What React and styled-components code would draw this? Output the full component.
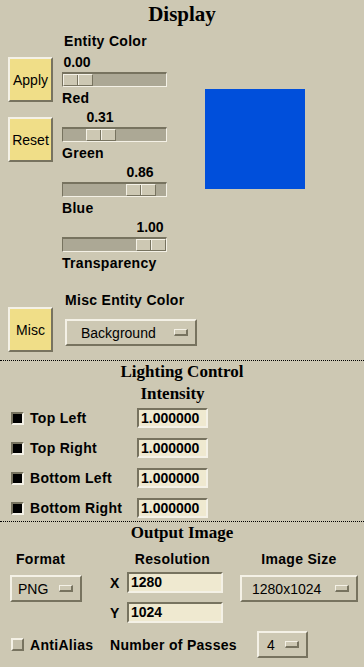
import React from "react";
import styled, { createGlobalStyle, css } from "styled-components";

const BG = "#cdc8b3";
const LIGHT = "#f4f1e6";
const DARK = "#77735f";

const GlobalStyle = createGlobalStyle`
  html, body {
    margin: 0;
    padding: 0;
    background: ${BG};
  }
  body {
    font-family: "Liberation Sans", Arial, sans-serif;
    font-size: 14px;
    color: #000;
  }
`;

const raised = css`
  border-style: solid;
  border-color: ${LIGHT} ${DARK} ${DARK} ${LIGHT};
`;

const sunken = css`
  border-style: solid;
  border-color: ${DARK} ${LIGHT} ${LIGHT} ${DARK};
`;

const Panel = styled.div`
  width: 364px;
  height: 667px;
  overflow: hidden;
  background: ${BG};
`;

const Title = styled.h1`
  margin: 0;
  height: 28px;
  line-height: 28px;
  text-align: center;
  font-family: "Liberation Serif", "Times New Roman", serif;
  font-weight: bold;
  font-size: 21px;
`;

const SectionTitle = styled.h2`
  margin: 1px 0 0;
  height: 20px;
  line-height: 20px;
  text-align: center;
  font-family: "Liberation Serif", "Times New Roman", serif;
  font-weight: bold;
  font-size: 17px;
`;

const Heading = styled.div`
  font-weight: bold;
  letter-spacing: 0.3px;
  line-height: 16px;
  height: 16px;
  white-space: nowrap;
  padding-left: ${(p) => p.$indent || 0}px;
  text-align: ${(p) => p.$align || "left"};
`;

const YellowButton = styled.button`
  box-sizing: border-box;
  width: 45px;
  height: 45px;
  padding: 0;
  background: #f0de88;
  ${raised};
  border-width: 2px;
  font-family: "Liberation Sans", Arial, sans-serif;
  font-size: 14px;
  color: #000;
`;

/* ---------- Display ---------- */

const DisplayArea = styled.div`
  display: flex;
  padding-left: 8px;
`;

const ButtonColumn = styled.div`
  display: flex;
  flex-direction: column;
  gap: 15px;
  padding-top: 29px;
`;

const SliderColumn = styled.div`
  display: flex;
  flex-direction: column;
  gap: 3px;
  width: 105px;
  margin-left: 9px;
  padding-top: 5px;

  & > ${Heading}:first-child {
    margin-bottom: 2px;
  }
`;

const SliderGroup = styled.div`
  display: flex;
  flex-direction: column;
`;

const ValueText = styled.div`
  width: 30px;
  height: 16px;
  line-height: 16px;
  font-weight: bold;
  text-align: center;
  margin-bottom: 2px;
`;

const Trough = styled.div`
  box-sizing: border-box;
  display: flex;
  width: 105px;
  height: 15px;
  background: #aca895;
  ${sunken};
  border-width: 2px 1px 1px 1px;
  margin-bottom: 3px;
`;

const Thumb = styled.div`
  box-sizing: border-box;
  width: 30px;
  height: 100%;
  ${raised};
  border-width: 1px;
  background: linear-gradient(
    to right,
    ${BG} 0 13px,
    ${DARK} 13px 14px,
    ${LIGHT} 14px 15px,
    ${BG} 15px
  );
`;

const Swatch = styled.div`
  width: 100px;
  height: 100px;
  margin: 61px 0 0 38px;
`;

/* ---------- Misc ---------- */

const MiscArea = styled.div`
  display: flex;
  padding-left: 8px;
  margin-top: 21px;
`;

const MiscButtonCell = styled.div`
  padding-top: 15px;
`;

const MiscControls = styled.div`
  margin-left: 12px;
  display: flex;
  flex-direction: column;
  gap: 11px;
`;

const Menu = styled.div`
  box-sizing: border-box;
  display: flex;
  align-items: center;
  width: ${(p) => p.$width}px;
  height: 27px;
  padding: 0 7px 0 ${(p) => p.$pad}px;
  ${raised};
  border-width: 2px;
  white-space: nowrap;
`;

const MenuMark = styled.span`
  box-sizing: border-box;
  width: 14px;
  height: 7px;
  margin-left: auto;
  ${raised};
  border-width: 1px 2px 2px 1px;
  background: ${BG};
`;

const Separator = styled.hr`
  margin: ${(p) => p.$top}px 0 0;
  border: 0;
  border-top: 1px dotted #000;
  height: 0;
`;

/* ---------- Lighting ---------- */

const LightGrid = styled.div`
  display: grid;
  grid-template-columns: 137px 71px;
  row-gap: 10px;
  margin-top: 2px;
`;

const GridHead = styled.div`
  grid-column: 2;
  text-align: center;
  white-space: nowrap;
  height: 20px;
  line-height: 20px;
  margin-bottom: -6px;
  font-family: "Liberation Serif", "Times New Roman", serif;
  font-weight: bold;
  font-size: 17px;
`;

const CheckLabel = styled.label`
  display: flex;
  align-items: center;
  gap: 6px;
  padding-left: 11px;
  font-weight: bold;
  letter-spacing: 0.3px;
  white-space: nowrap;
`;

const Check = styled.span`
  box-sizing: border-box;
  width: 13px;
  height: 13px;
  border-width: 2px;
  ${(p) => (p.$on ? sunken : raised)};
  background: ${(p) => (p.$on ? "#000" : "#c4bfaa")};
`;

const Field = styled.div`
  box-sizing: border-box;
  width: ${(p) => p.$width}px;
  height: ${(p) => p.$height}px;
  padding-left: 2px;
  ${sunken};
  border-width: 2px;
  background: #efe9d0;
  font-weight: bold;
  line-height: ${(p) => p.$height - 4}px;
`;

/* ---------- Output ---------- */

const OutputArea = styled.div`
  display: flex;
  margin-top: 8px;
`;

const FormatColumn = styled.div`
  width: 110px;
  padding-left: 10px;
  box-sizing: border-box;
  display: flex;
  flex-direction: column;
  gap: 8px;
`;

const ResolutionColumn = styled.div`
  width: 113px;
  display: flex;
  flex-direction: column;
`;

const AxisRow = styled.div`
  display: flex;
  align-items: center;
  margin-top: ${(p) => p.$top}px;
`;

const AxisLabel = styled.span`
  width: 17px;
  font-weight: bold;
`;

const SizeColumn = styled.div`
  width: 118px;
  margin-left: 17px;
  display: flex;
  flex-direction: column;
  gap: 8px;
`;

const PassRow = styled.div`
  display: flex;
  align-items: center;
  margin-top: 8px;
`;

const PassCell = styled.div`
  width: ${(p) => p.$width}px;
  font-weight: bold;
  letter-spacing: 0.3px;
  white-space: nowrap;
`;

const sliders = [
  { label: "Red", value: 0.0 },
  { label: "Green", value: 0.31 },
  { label: "Blue", value: 0.86 },
  { label: "Transparency", value: 1.0 },
];

const lights = ["Top Left", "Top Right", "Bottom Left", "Bottom Right"];

function Slider({ label, value }) {
  const offset = Math.round(value * 73);
  return (
    <SliderGroup>
      <ValueText style={{ marginLeft: offset }}>{value.toFixed(2)}</ValueText>
      <Trough>
        <Thumb style={{ marginLeft: offset }} />
      </Trough>
      <Heading>{label}</Heading>
    </SliderGroup>
  );
}

function OptionMenu({ width, pad, children }) {
  return (
    <Menu $width={width} $pad={pad}>
      <span>{children}</span>
      <MenuMark />
    </Menu>
  );
}

export default function App() {
  const [r, g, b] = sliders.slice(0, 3).map((s) => Math.round(s.value * 255));
  return (
    <Panel>
      <GlobalStyle />
      <Title>Display</Title>

      <DisplayArea>
        <ButtonColumn>
          <YellowButton>Apply</YellowButton>
          <YellowButton>Reset</YellowButton>
        </ButtonColumn>
        <SliderColumn>
          <Heading $indent={2}>Entity Color</Heading>
          {sliders.map((s) => (
            <Slider key={s.label} {...s} />
          ))}
        </SliderColumn>
        <Swatch style={{ background: `rgb(${r}, ${g}, ${b})` }} />
      </DisplayArea>

      <MiscArea>
        <MiscButtonCell>
          <YellowButton>Misc</YellowButton>
        </MiscButtonCell>
        <MiscControls>
          <Heading>Misc Entity Color</Heading>
          <OptionMenu width={132} pad={14}>
            Background
          </OptionMenu>
        </MiscControls>
      </MiscArea>

      <Separator $top={8} />
      <SectionTitle>Lighting Control</SectionTitle>
      <LightGrid>
        <GridHead>Intensity</GridHead>
        {lights.map((name) => (
          <React.Fragment key={name}>
            <CheckLabel>
              <Check $on />
              {name}
            </CheckLabel>
            <Field $width={71} $height={20}>
              1.000000
            </Field>
          </React.Fragment>
        ))}
      </LightGrid>

      <Separator $top={3} />
      <SectionTitle>Output Image</SectionTitle>
      <OutputArea>
        <FormatColumn>
          <Heading $indent={6}>Format</Heading>
          <OptionMenu width={72} pad={6}>
            PNG
          </OptionMenu>
        </FormatColumn>
        <ResolutionColumn>
          <Heading $indent={12} $align="center">
            Resolution
          </Heading>
          <AxisRow $top={5}>
            <AxisLabel>X</AxisLabel>
            <Field $width={96} $height={21}>
              1280
            </Field>
          </AxisRow>
          <AxisRow $top={9}>
            <AxisLabel>Y</AxisLabel>
            <Field $width={96} $height={21}>
              1024
            </Field>
          </AxisRow>
        </ResolutionColumn>
        <SizeColumn>
          <Heading $align="center">Image Size</Heading>
          <OptionMenu width={118} pad={10}>
            1280x1024
          </OptionMenu>
        </SizeColumn>
      </OutputArea>

      <PassRow>
        <PassCell $width={110}>
          <CheckLabel>
            <Check />
            AntiAlias
          </CheckLabel>
        </PassCell>
        <PassCell $width={147}>Number of Passes</PassCell>
        <OptionMenu width={51} pad={8}>
          4
        </OptionMenu>
      </PassRow>
    </Panel>
  );
}
